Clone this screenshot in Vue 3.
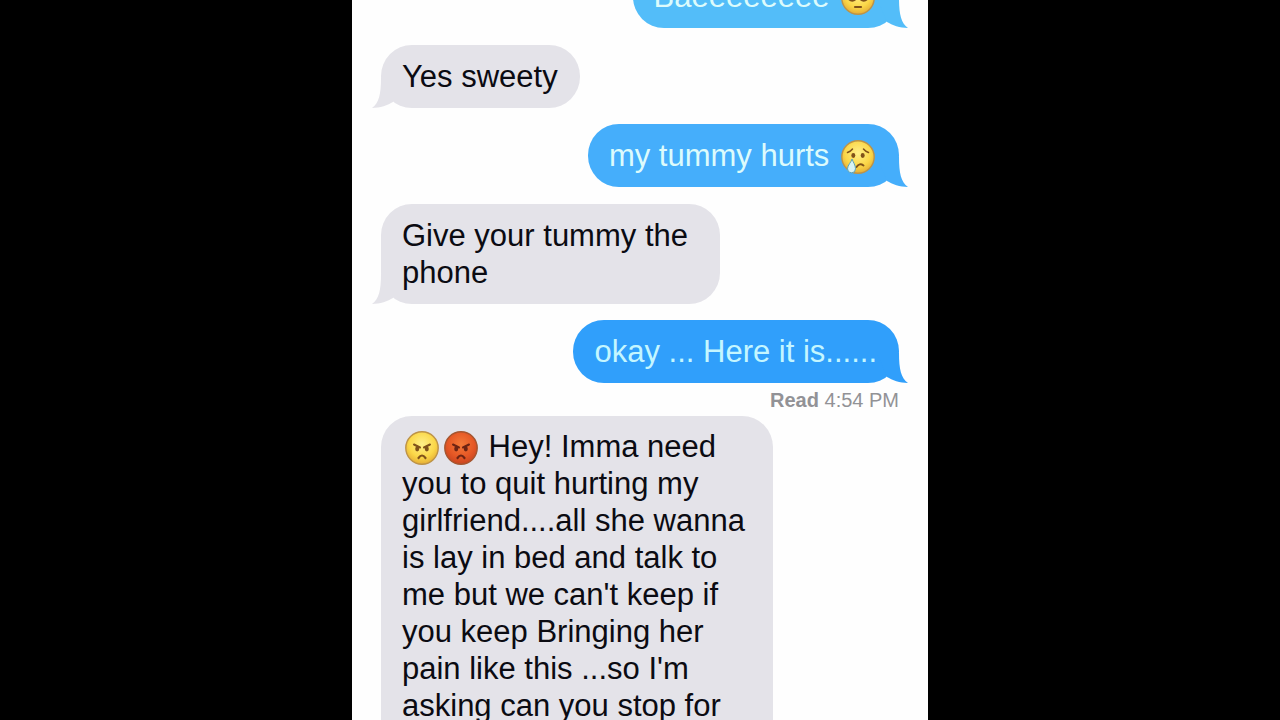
<script setup>
import { h } from 'vue'

const messages = [
  { side: 'out', tone: 'sky', parts: ['Baeeeeeeee ', { face: 'pensive' }] },
  { side: 'in', parts: ['Yes sweety'] },
  { side: 'out', tone: 'azure', parts: ['my tummy hurts ', { face: 'crying' }] },
  { side: 'in', size: 'medium', parts: ['Give your tummy the\nphone'] },
  { side: 'out', tone: 'blue', parts: ['okay ... Here it is......'], read: '4:54 PM' },
  {
    side: 'in',
    size: 'large',
    open: true,
    parts: [
      { face: 'angry' },
      { face: 'pouting' },
      " Hey! Imma need\nyou to quit hurting my\ngirlfriend....all she wanna\nis lay in bed and talk to\nme but we can't keep if\nyou keep Bringing her\npain like this ...so I'm\nasking can you stop for",
    ],
  },
]

const line = (d, width = 1.8) =>
  h('path', { d, fill: 'none', stroke: 'currentColor', 'stroke-width': width, 'stroke-linecap': 'round' })
const dot = (cx, cy) => h('ellipse', { cx, cy, rx: 2, ry: 2.4, fill: 'currentColor' })

const frown = () => [
  line('M9 13.5 L15 16.5', 2),
  line('M25 13.5 L19 16.5', 2),
  dot(12.2, 18),
  dot(21.8, 18),
  line('M13.5 27 Q17 22 20.5 27', 2.2),
]

const features = {
  pensive: () => [
    line('M8 11.5 Q11 11 13 9', 1.3),
    line('M26 11.5 Q23 11 21 9', 1.3),
    line('M7.5 17.5 Q11 21 14.5 18', 2.4),
    line('M26.5 17.5 Q23 21 19.5 18', 2.4),
    line('M14 26 L20 26', 2.2),
  ],
  crying: () => [
    line('M6.5 12.5 Q9.5 11.5 11.5 9', 1.5),
    line('M27.5 12.5 Q24.5 11.5 22.5 9', 1.5),
    dot(12.3, 15.5),
    dot(21.7, 15.5),
    line('M15.5 27 Q18.5 22.5 22.5 25.5', 2),
    h('path', {
      d: 'M11 19 C10.5 22 6.5 25 6.5 28.8 A4 4 0 0 0 14.5 28.8 C14.5 25 12 22 11 19 Z',
      fill: '#d8f3f5',
      stroke: '#5aa3b8',
      'stroke-width': 1,
    }),
  ],
  angry: frown,
  pouting: frown,
}

const Face = (props) =>
  h('svg', { viewBox: '0 0 34 34', role: 'img', 'aria-label': props.kind + ' face' }, [
    h('defs', [
      h('radialGradient', { id: 'skin-' + props.kind, cx: '50%', cy: '38%', r: '62%' },
        props.kind === 'pouting'
          ? [
              h('stop', { offset: '0', 'stop-color': '#f47a38' }),
              h('stop', { offset: '0.65', 'stop-color': '#e55725' }),
              h('stop', { offset: '1', 'stop-color': '#c94520' }),
            ]
          : [
              h('stop', { offset: '0', 'stop-color': '#fff08a' }),
              h('stop', { offset: '0.65', 'stop-color': '#fbd748' }),
              h('stop', { offset: '1', 'stop-color': '#e5ae36' }),
            ]),
    ]),
    h('circle', {
      cx: 17,
      cy: 17,
      r: 16.2,
      fill: `url(#skin-${props.kind})`,
      stroke: props.kind === 'pouting' ? '#a5552f' : '#bd9347',
      'stroke-width': 1.4,
    }),
    ...features[props.kind](),
  ])
Face.props = ['kind']
</script>

<template>
  <div class="screen">
    <main class="chat">
      <ol class="thread">
        <li v-for="(m, i) in messages" :key="i" class="message" :class="[m.side, m.tone]">
          <div class="bubble" :class="[m.size, { open: m.open }]">
            <p class="text"><template v-for="(p, j) in m.parts" :key="j"><Face v-if="p.face" :kind="p.face" class="face" :class="p.face" /><template v-else>{{ p }}</template></template></p>
            <svg v-if="!m.open" class="tail" viewBox="0 0 36 30" aria-hidden="true">
              <path d="M27 0 C27 16 29 25 36 30 C28 30 20 27 15 24 L5 0 Z" />
            </svg>
          </div>
          <p v-if="m.read" class="receipt"><b>Read</b> {{ m.read }}</p>
        </li>
      </ol>
    </main>
  </div>
</template>

<style>
body {
  margin: 0;
  background: #000;
}
</style>

<style scoped>
.screen {
  display: flex;
  justify-content: center;
  height: 100vh;
  overflow: hidden;
  background: #000;
  font-family: "Liberation Sans", Arial, sans-serif;
}
.chat {
  box-sizing: border-box;
  width: 45%;
  padding: 0 29px;
  overflow: hidden;
  background: #fefefe;
}
.thread {
  display: flex;
  flex-direction: column;
  margin: -35px 0 0;
  padding: 0;
  list-style: none;
}
.message {
  display: flex;
  flex-direction: column;
}
.in {
  align-items: flex-start;
  margin-bottom: 16px;
  color: #0b0b12;
  --fill: #e4e3e9;
}
.out {
  align-items: flex-end;
  margin-bottom: 17px;
  color: #dcfbfc;
}
.sky { --fill: #53bdf9; }
.azure { --fill: #45aefb; }
.blue {
  margin-bottom: 6px;
  color: #c4f6ff;
  --fill: #309ffb;
}
.bubble {
  position: relative;
  box-sizing: border-box;
  padding: 13px 22px 13px 21px;
  border-radius: 31px;
  background: var(--fill);
}
.medium { width: 339px; }
.large {
  width: 392px;
  padding-top: 12px;
}
.open { border-radius: 31px 31px 0 0; }
.text {
  margin: 0;
  font-size: 31px;
  line-height: 37px;
  white-space: pre;
}
.face {
  width: 34px;
  height: 34px;
  margin: -2px 2px -2px 3px;
  vertical-align: -6px;
  color: #80521a;
}
.pouting { color: #6d2413; }
.tail {
  position: absolute;
  right: -9px;
  bottom: 0;
  width: 36px;
  height: 30px;
  fill: var(--fill);
}
.in .tail {
  right: auto;
  left: -9px;
  transform: scaleX(-1);
}
.receipt {
  margin: 7px 0 0;
  color: #929296;
  font-size: 20px;
  line-height: 20px;
}
</style>
